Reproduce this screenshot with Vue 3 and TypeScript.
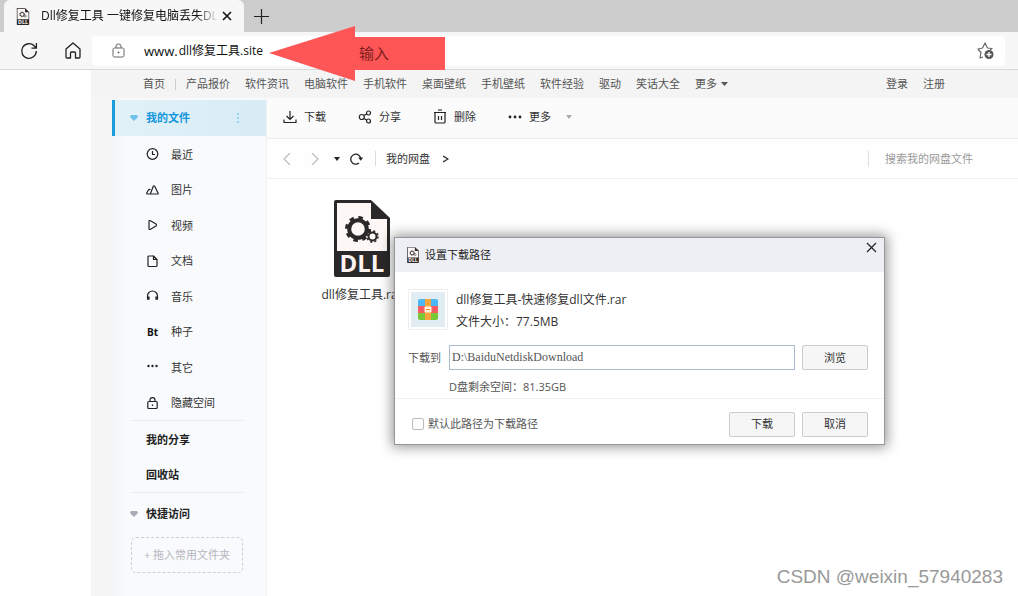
<script setup lang="ts">
import { ref } from 'vue'

interface SideItem {
  label: string
  icon: string
}

const siteLinks: string[] = ['产品报价', '软件资讯', '电脑软件', '手机软件', '桌面壁纸', '手机壁纸', '软件经验', '驱动', '笑话大全']

const categories: SideItem[] = [
  { label: '最近', icon: 'clock' },
  { label: '图片', icon: 'image' },
  { label: '视频', icon: 'video' },
  { label: '文档', icon: 'doc' },
  { label: '音乐', icon: 'music' },
  { label: '种子', icon: 'bt' },
  { label: '其它', icon: 'more' },
  { label: '隐藏空间', icon: 'lock' },
]

const savePath = ref('D:\\BaiduNetdiskDownload')
const useAsDefault = ref(false)
const address = ref('dll修复工具.site')
const query = ref('')
</script>

<template>
  <div class="screen">
    <svg class="defs" width="0" height="0" aria-hidden="true">
      <defs>
        <symbol id="dll-file" viewBox="0 0 56 77">
          <path d="M2 0H37L56 18V75Q56 77 54 77H2Q0 77 0 75V2Q0 0 2 0Z" fill="#2a2829" />
          <path d="M3 3H37V19H53V51H3Z" fill="#fdf7f6" />
          <g fill="none" stroke="#2a2829">
            <circle cx="24" cy="29" r="8.800" stroke-width="4" />
            <circle cx="24" cy="29" r="11.500" stroke-width="3" stroke-dasharray="4.500 4.532" />
            <circle cx="38.500" cy="36.500" r="4" stroke-width="2" />
            <circle cx="38.500" cy="36.500" r="5.500" stroke-width="1.500" stroke-dasharray="2.150 2.170" />
          </g>
          <text x="28" y="72" text-anchor="middle" font-family="Open Sans, sans-serif" font-weight="700" font-size="24" fill="#fff3f0">DLL</text>
        </symbol>
      </defs>
    </svg>

    <header class="browser">
      <div class="tabs">
        <div class="tab">
          <svg class="favicon" width="14" height="17"><use href="#dll-file" /></svg>
          <span class="tab-title">Dll修复工具 一键修复电脑丢失DL</span>
          <button class="plain" aria-label="关闭标签页">
            <svg width="10" height="10" viewBox="0 0 10 10"><path d="M1 1L9 9M9 1L1 9" stroke="#111" stroke-width="1.600" /></svg>
          </button>
        </div>
        <button class="plain new-tab" aria-label="新建标签页">
          <svg width="15" height="15" viewBox="0 0 15 15"><path d="M7.500 0V15M0 7.500H15" stroke="#222" stroke-width="1.200" /></svg>
        </button>
      </div>
      <div class="location">
        <button class="plain" aria-label="刷新">
          <svg width="18" height="18" viewBox="0 0 18 18" fill="none" stroke="#222" stroke-width="1.300">
            <path d="M16.300 9A7.300 7.300 0 1 1 14.300 4L16.300 6M16.400 1V6.200H11.500" />
          </svg>
        </button>
        <button class="plain home" aria-label="主页">
          <svg width="16" height="17" viewBox="0 0 16 17" fill="none" stroke="#222" stroke-width="1.300">
            <path d="M1 7L8 1L15 7V15Q15 16 14 16H10.500V11Q10.500 10 9.500 10H6.500Q5.500 10 5.500 11V16H2Q1 16 1 15Z" stroke-linejoin="round" />
          </svg>
        </button>
        <div class="address">
          <svg width="13" height="15" viewBox="0 0 13 15" fill="none" stroke="#666">
            <rect x="1" y="5" width="11" height="9" rx="1.500" /><path d="M4 5V3Q4 1 6.500 1T9 3V5" /><circle cx="6.500" cy="9.500" r=".6" fill="#555" />
          </svg>
          <label class="www" for="address">www.</label>
          <input id="address" v-model="address" type="text">
          <button class="plain" aria-label="收藏">
            <svg width="18" height="18" viewBox="0 0 18 18">
              <path d="M6 15L3 16L4 10.500L1 7L5.500 6L8 1L10.500 6L15 6.500L13 8" fill="none" stroke="#666" stroke-width="1.200" stroke-linejoin="round" />
              <circle cx="12" cy="12.500" r="4.500" fill="#555" /><path d="M12 10V15M9.500 12.500H14.500" stroke="#fff" stroke-width="1.300" />
            </svg>
          </button>
        </div>
      </div>
    </header>

    <div class="page">
      <nav class="site-nav">
        <a href="#">首页</a><i class="bar" />
        <a v-for="link in siteLinks" :key="link" href="#">{{ link }}</a>
        <a href="#" class="more-link">更多<svg width="7" height="4" viewBox="0 0 7 4"><path d="M0 0H7L3.500 4Z" fill="#555" /></svg></a>
        <a href="#" class="login">登录</a>
        <a href="#">注册</a>
      </nav>

      <div class="disk">
        <aside class="sidebar">
          <a href="#" class="active">
            <svg width="8" height="6" viewBox="0 0 8 6"><path d="M1 0H7L8 2L4 6L0 2Z" fill="#70c0ec" /></svg>
            <span>我的文件</span>
            <svg class="dots" width="4" height="12" viewBox="0 0 4 12" fill="#7cc7ee"><circle cx="2" cy="2" r="1" /><circle cx="2" cy="6" r="1" /><circle cx="2" cy="10" r="1" /></svg>
          </a>
          <div class="categories">
            <a v-for="item in categories" :key="item.label" href="#">
              <svg width="13" height="13" viewBox="0 0 13 13" fill="none" stroke="#222" stroke-width="1.200" stroke-linejoin="round">
                <template v-if="item.icon === 'clock'"><circle cx="6.500" cy="6" r="5.300" /><path d="M6.500 3V6.500H9" /></template>
                <path v-else-if="item.icon === 'image'" d="M4.300 10L7.300 2.300Q8 1.200 8.700 2.300L12 9Q12.500 10 11.500 10H1.500Q.5 10 .8 9L2.500 5.800Q3.300 4.800 4.300 6" />
                <path v-else-if="item.icon === 'video'" d="M3 2.500Q3 1 4.500 1.700L10 5Q11 6 10 7L4.500 10.300Q3 11 3 9.500Z" />
                <path v-else-if="item.icon === 'doc'" d="M7.500 1H3Q2 1 2 2V10.500Q2 11.500 3 11.500H10Q11 11.500 11 10.500V4.500L7.500 1V4.500H11" />
                <template v-else-if="item.icon === 'music'"><path d="M1.500 8.500V6A5 5 0 0 1 11.500 6V8.500" /><path d="M2.300 6.500V9.800M10.700 6.500V9.800" stroke-width="2.600" /></template>
                <text v-else-if="item.icon === 'bt'" x="1" y="9.500" stroke="none" fill="#111" font-family="Open Sans, sans-serif" font-size="10" font-weight="700">Bt</text>
                <g v-else-if="item.icon === 'more'" fill="#222" stroke="none"><circle cx="2.500" cy="5" r="1.200" /><circle cx="6.500" cy="5" r="1.200" /><circle cx="10.500" cy="5" r="1.200" /></g>
                <template v-else><rect x="1.800" y="4.500" width="9.400" height="7" rx="1" /><path d="M4 4.500V3Q4 .7 6.500 .7T9 3V4.500M6.500 7.500V9" /></template>
              </svg>
              <span>{{ item.label }}</span>
            </a>
          </div>
          <div class="folders">
            <a href="#">我的分享</a>
            <a href="#">回收站</a>
          </div>
          <a href="#" class="quick">
            <svg width="8" height="6" viewBox="0 0 8 6"><path d="M1 0H7L8 2L4 6L0 2Z" fill="#a9abb5" /></svg>
            <span>快捷访问</span>
          </a>
          <button class="drop-zone">+ 拖入常用文件夹</button>
        </aside>

        <main class="main">
          <div class="actions">
            <button class="plain">
              <svg width="14" height="14" viewBox="0 0 14 14" fill="none" stroke="#222" stroke-width="1.200"><path d="M7 1V9M3.500 6L7 9.500L10.500 6M1 9.500V12.500H13V9.500" /></svg>下载
            </button>
            <button class="plain">
              <svg width="14" height="14" viewBox="0 0 14 14" fill="none" stroke="#222" stroke-width="1.200"><circle cx="3.800" cy="7" r="2.500" /><circle cx="10.500" cy="3" r="2" /><circle cx="10.500" cy="11" r="2" /><path d="M5.800 5.500L8.800 4M5.800 8.500L8.800 10" /></svg>分享
            </button>
            <button class="plain">
              <svg width="14" height="15" viewBox="0 0 14 15" fill="none" stroke="#222" stroke-width="1.200"><path d="M1 3.500H13M5 1H9M2 3.500V13Q2 14 3 14H11Q12 14 12 13V3.500M5.500 7V11M8.500 7V11" /></svg>删除
            </button>
            <button class="plain">
              <svg width="14" height="4" viewBox="0 0 14 4" fill="#222"><circle cx="2" cy="2" r="1.400" /><circle cx="7" cy="2" r="1.400" /><circle cx="12" cy="2" r="1.400" /></svg>更多
              <svg class="drop" width="6" height="4" viewBox="0 0 6 4"><path d="M0 0H6L3 4Z" fill="#aaa" /></svg>
            </button>
          </div>
          <div class="crumbs">
            <button class="plain" aria-label="后退"><svg width="8" height="12" viewBox="0 0 8 12"><path d="M7 0L1 6L7 12" fill="none" stroke="#bbb" stroke-width="1.200" /></svg></button>
            <button class="plain forward" aria-label="前进"><svg width="8" height="12" viewBox="0 0 8 12"><path d="M1 0L7 6L1 12" fill="none" stroke="#bbb" stroke-width="1.200" /></svg></button>
            <button class="plain history" aria-label="历史"><svg width="6" height="4" viewBox="0 0 6 4"><path d="M0 0H6L3 4Z" fill="#222" /></svg></button>
            <button class="plain reload" aria-label="重新加载"><svg width="13" height="12" viewBox="0 0 13 12"><path d="M9 10A5 5 0 1 1 10.800 6" fill="none" stroke="#222" stroke-width="1.300" /><path d="M8.200 4.500H13L10.800 7.800Z" fill="#222" /></svg></button>
            <i class="divider" />
            <a href="#">我的网盘</a>
            <svg width="6" height="8" viewBox="0 0 6 8"><path d="M0 1L5 4L0 7" fill="none" stroke="#222" stroke-width="1.200" /></svg>
            <input v-model="query" class="search" type="search" aria-label="搜索" placeholder="搜索我的网盘文件">
          </div>
          <div class="files">
            <figure class="file">
              <svg width="56" height="77"><use href="#dll-file" /></svg>
              <figcaption>dll修复工具.rar</figcaption>
            </figure>
          </div>
        </main>
      </div>
    </div>

    <div class="arrow">
      <svg width="176" height="55" viewBox="0 0 176 55"><path d="M0 27L86 0V11H176V44H86V55Z" fill="#fe5656" /></svg>
      <span>输入</span>
    </div>

    <section class="dialog" role="dialog" aria-labelledby="dialog-title">
      <header class="dialog-head">
        <svg width="12" height="16"><use href="#dll-file" /></svg>
        <h1 id="dialog-title">设置下载路径</h1>
        <button class="plain dialog-close" aria-label="关闭">
          <svg width="11" height="11" viewBox="0 0 11 11"><path d="M1 1L10 10M10 1L1 10" stroke="#222" stroke-width="1.200" /></svg>
        </button>
      </header>
      <div class="dialog-body">
        <div class="file-row">
          <div class="thumb">
            <svg width="20" height="21" viewBox="0 0 20 21">
              <path d="M2 0H18Q20 0 20 2V7H0V2Q0 0 2 0Z" fill="#4bb7f5" /><path d="M0 7H20V14H0Z" fill="#fa5c62" />
              <path d="M0 14H20V19Q20 21 18 21H2Q0 21 0 19Z" fill="#7ac736" /><path d="M7 0H13V21H7Z" fill="#f8a63b" />
              <rect x="6.500" y="7.500" width="7" height="6" rx="1" fill="#fff2d8" /><path d="M8 10.500H12" stroke="#ed8c35" />
            </svg>
          </div>
          <p>dll修复工具-快速修复dll文件.rar<br>文件大小：77.5MB</p>
        </div>
        <div class="path-row">
          <label for="path">下载到</label>
          <input id="path" v-model="savePath" type="text">
          <button class="btn">浏览</button>
        </div>
        <p class="space">D盘剩余空间：81.35GB</p>
      </div>
      <footer class="dialog-foot">
        <input id="default" v-model="useAsDefault" type="checkbox">
        <label for="default">默认此路径为下载路径</label>
        <button class="btn">下载</button>
        <button class="btn">取消</button>
      </footer>
    </section>

    <div class="watermark">CSDN @weixin_57940283</div>
  </div>
</template>

<style>
body { background: #fff; }
</style>

<style scoped>
.screen {
  position: relative;
  display: flex;
  flex-direction: column;
  min-height: 100vh;
  overflow: hidden;
  font: 11px/16px "Open Sans", "Noto Sans CJK SC", sans-serif;
  color: #333;
}
.screen * { box-sizing: border-box; }
svg { display: block; flex: none; }
a { color: inherit; text-decoration: none; white-space: nowrap; }
input, button { font: inherit; color: inherit; }
.defs { position: absolute; }
.plain { display: flex; align-items: center; padding: 0; border: 0; background: none; }

.tabs { display: flex; height: 32px; background: #cdcdcd; }
.tab {
  display: flex;
  align-items: center;
  justify-content: space-between;
  width: 240px;
  margin-left: 4px;
  padding: 0 12px;
  border-radius: 6px 6px 0 0;
  background: #f7f7f7;
  color: #111;
  font-size: 12px;
}
.tab-title {
  margin: 0 auto 0 11px;
  white-space: nowrap;
  -webkit-mask-image: linear-gradient(to right, #000 88%, transparent);
  mask-image: linear-gradient(to right, #000 88%, transparent);
}
.new-tab { margin-left: 10px; }
.location {
  display: flex;
  align-items: center;
  height: 38px;
  padding: 0 13px 0 20px;
  border-bottom: 1px solid #d9d9d9;
  background: #f7f7f7;
}
.home { margin: 0 11px 0 27px; }
.address {
  display: flex;
  flex: 1;
  align-items: center;
  height: 30px;
  padding: 0 10px 0 20px;
  border-radius: 4px;
  background: #fff;
  color: #111;
  font-size: 12px;
}
.www { margin: 0 1px 0 19px; font-size: 13px; }
.address input { flex: 1; min-width: 0; padding: 0; border: 0; outline: 0; background: none; }

.page { display: flex; flex: 1; flex-direction: column; margin-left: 91px; }
.site-nav {
  display: flex;
  align-items: center;
  gap: 15px;
  height: 28px;
  padding: 0 73px 0 52px;
  background: #f4f4f4;
  color: #555;
}
.bar { width: 1px; height: 11px; margin: 0 -5px; background: #ccc; }
.more-link { display: flex; align-items: center; gap: 4px; }
.login { margin-left: auto; }
.disk { display: flex; flex: 1; background: #f5f5f5; }
.sidebar {
  display: flex;
  flex-direction: column;
  width: 155px;
  margin-left: 21px;
  padding-top: 2px;
  border-right: 1px solid #f0f1f3;
  background: linear-gradient(to right, #f3f4f6, #f9fafc 12px);
}
.active {
  display: flex;
  align-items: center;
  height: 36px;
  padding: 0 26px 0 15px;
  border-left: 3px solid #1c9ddb;
  background: linear-gradient(to right, #e1f1f8, #d8ecf5);
  color: #1296db;
  font-weight: 700;
}
.active span, .quick span { margin-left: 8px; }
.dots { margin-left: auto; }
.categories, .folders { display: flex; flex-direction: column; margin: 0 23px 0 19px; border-bottom: 1px solid #e8e9eb; }
.categories { height: 285px; }
.categories a { display: flex; flex: 1; align-items: center; padding: 2px 0 0 15px; }
.categories span { margin-left: 12px; }
.folders { height: 72px; font-weight: 700; color: #222; }
.folders a { display: flex; flex: 1; align-items: center; padding: 2px 0 0 15px; }
.quick { display: flex; align-items: center; height: 40px; padding: 2px 0 0 18px; color: #222; font-weight: 700; }
.drop-zone {
  height: 36px;
  margin: 4px 23px 0 19px;
  padding: 0;
  border: 1px dashed #ccced4;
  border-radius: 5px;
  background: none;
  color: #b5b7bd;
}

.main { display: flex; flex: 1; flex-direction: column; min-width: 0; background: #fff; }
.actions {
  display: flex;
  align-items: center;
  gap: 32px;
  height: 41px;
  padding: 0 16px 3px;
  border-bottom: 1px solid #ececec;
  background: #fbfbfb;
}
.actions button { gap: 7px; }
.drop { margin-left: 8px; }
.crumbs {
  display: flex;
  align-items: center;
  height: 40px;
  padding: 0 16px;
  border-bottom: 1px solid #f0f0f0;
  background: #fefefe;
}
.forward { margin-left: 20px; }
.history { margin-left: 15px; }
.reload { margin-left: 10px; }
.divider { width: 1px; height: 15px; margin: 0 10px 0 12px; background: #ddd; }
.crumbs > svg { margin-left: 13px; }
.search {
  width: 134px;
  height: 16px;
  margin-left: auto;
  padding: 0 0 0 16px;
  border: 0;
  border-left: 1px solid #ddd;
  outline: 0;
  background: none;
}
.search::placeholder { color: #999; opacity: 1; }
.files { display: flex; padding: 21px 48px; }
.file { display: flex; flex-direction: column; align-items: center; gap: 10px; width: 94px; margin: 0; font-size: 12px; white-space: nowrap; }

.arrow { position: absolute; top: 26px; left: 269px; color: #7d1d1d; font-size: 15px; }
.arrow span { position: absolute; top: 19px; left: 90px; }

.dialog {
  position: absolute;
  top: 237px;
  left: 394px;
  width: 491px;
  border: 1px solid #96979b;
  background: #fff;
  box-shadow: 0 0 12px 2px rgba(0, 0, 0, .42);
}
.dialog-head { display: flex; align-items: center; height: 34px; padding: 0 7px 0 12px; background: #edeff4; color: #222; }
.dialog-head h1 { margin: 0 auto 0 6px; font-size: 11px; font-weight: 400; }
.dialog-close { margin-bottom: 15px; }
.dialog-body { height: 127px; padding: 17px 16px 0 13px; border-bottom: 1px solid #efefef; }
.file-row { display: flex; gap: 8px; align-items: flex-start; font-size: 12px; line-height: 22px; }
.file-row p, .space { margin: 0; }
.thumb {
  display: grid;
  place-items: center;
  width: 40px;
  height: 41px;
  border: 3px solid #fff;
  outline: 1px solid #eee;
  outline-offset: -1px;
  background: #e1edf3;
}
.path-row { display: flex; align-items: center; margin-top: 12px; color: #555; }
.path-row label { width: 41px; }
.path-row input {
  flex: 1;
  min-width: 0;
  height: 25px;
  margin-right: 7px;
  padding: 0 2px;
  border: 1px solid #a9bccd;
  outline: 0;
  font: 12px/16px "Liberation Serif", serif;
}
.btn { width: 66px; height: 25px; padding: 0; border: 1px solid #ccc; border-radius: 2px; background: #f6f6f6; color: #333; }
.space { margin: 9px 0 0 41px; color: #555; }
.dialog-foot { display: flex; align-items: center; gap: 7px; height: 45px; padding: 5px 16px 0 17px; color: #555; }
.dialog-foot input { width: 12px; height: 12px; margin: 0; border: 1px solid #bbb; border-radius: 2px; appearance: none; background: #fff; }
.dialog-foot input:checked { background: #1296db; }
.dialog-foot label { margin: 0 auto 0 -3px; }

.watermark { position: absolute; right: 15px; bottom: 7px; color: #999; font: 19px/24px "Liberation Sans", sans-serif; }
</style>
